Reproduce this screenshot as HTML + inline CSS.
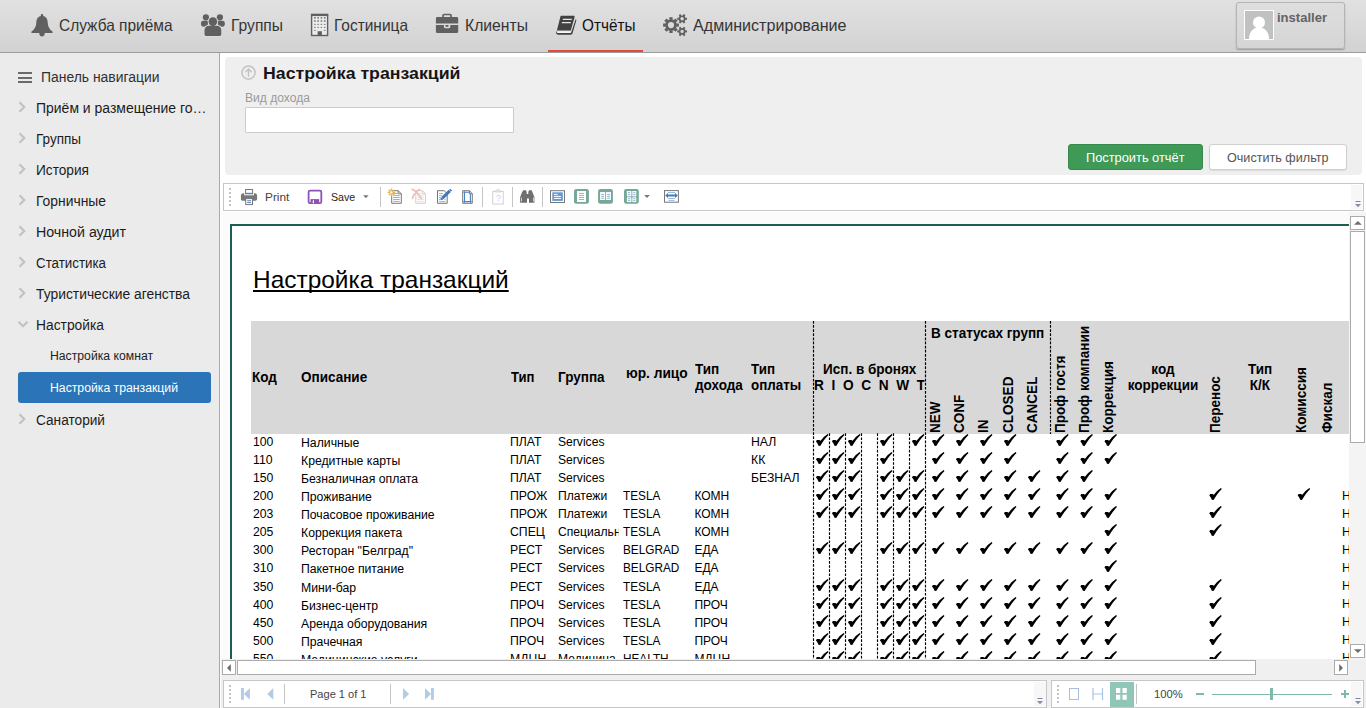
<!DOCTYPE html>
<html lang="ru"><head><meta charset="utf-8"><title>Настройка транзакций</title>
<style>
html,body{margin:0;padding:0;width:1366px;height:708px;overflow:hidden;background:#fff;font-family:"Liberation Sans",sans-serif;}
*{box-sizing:border-box;}
.a{position:absolute;}
.t{position:absolute;white-space:pre;transform-origin:0 50%;display:block;}
svg{position:absolute;overflow:visible;}
#nav{position:absolute;left:0;top:0;width:1366px;height:53px;background:linear-gradient(#e1e1e1,#d2d2d2);border-bottom:1px solid #9c9c9c;}
#side{position:absolute;left:0;top:53px;width:220px;height:655px;background:#ebebeb;border-right:1px solid #a9a9a9;}
#panel{position:absolute;left:225px;top:57px;width:1137px;height:118px;background:#efefef;border-radius:4px;}
.tb{position:absolute;background:#fff;border:1px solid #c6c6c6;}
.sep{position:absolute;width:1px;background:#c4c4c4;}
.grip{position:absolute;width:2px;}
.grip i{position:absolute;left:0;width:2px;height:2px;background:#c4c4c4;}
.rot{position:absolute;white-space:pre;font-weight:bold;font-size:14px;line-height:14px;color:#000;transform-origin:0 0;transform:rotate(-90deg) scaleX(.967);}
.d{position:absolute;font-size:12px;line-height:12px;color:#000;white-space:pre;transform-origin:0 50%;transform:scaleX(1.02);}
.h{position:absolute;font-size:14px;line-height:16px;font-weight:bold;color:#000;white-space:pre;transform-origin:0 50%;transform:scaleX(.965);}
.dash{position:absolute;width:1px;background:repeating-linear-gradient(to bottom,#000 0,#000 3px,transparent 3px,transparent 4px);}
.ck{position:absolute;width:13px;height:12px;}
</style></head><body>
<div id="nav"><svg style="left:31px;top:13.6px" width="22" height="22.6" viewBox="0 0 22 22.6"><path fill="#606060" d="M11 0c.75 0 1.2.5 1.2 1.2v.75c3 .65 4.5 3.1 4.5 6.3 0 4.2 1.7 6.9 4.7 9.3.3.25.4.6.3.9-.15.4-.5.6-.9.6H1.200c-.4 0-.75-.2-.9-.6-.1-.3 0-.65.3-.9 3-2.4 4.700-5.100 4.700-9.300 0-3.200 1.500-5.650 4.500-6.300V1.200C9.800.5 10.250 0 11 0zM8.300 18.600h5.400v1.200c0 1.500-1.200 2.700-2.700 2.700s-2.700-1.200-2.700-2.700z"/></svg><svg style="left:200px;top:13px" width="26" height="24" viewBox="200 13 26 24">
<circle cx="205.9" cy="17.3" r="3.1" fill="#606060"/><circle cx="219.9" cy="17.3" r="3.1" fill="#606060"/>
<path fill="#606060" d="M203.200 20.800h4.700v5.900h-4.400c-1.500 0-2.500-1-2.500-2.400v-1.200c0-1.400.9-2.300 2.200-2.300zM222.600 20.800h-4.700v5.900h4.400c1.500 0 2.500-1 2.500-2.400v-1.200c0-1.400-.9-2.300-2.200-2.300z"/>
<circle cx="212.9" cy="21.6" r="5.200" fill="#dcdcdc"/>
<path fill="#dcdcdc" d="M203.500 37V30c0-3 2.400-5.300 5.200-5.300h8.400c2.800 0 5.200 2.300 5.200 5.300v7z"/>
<circle cx="212.9" cy="21.600" r="4.300" fill="#606060"/>
<path fill="#606060" d="M204.500 34.200V30.200c0-2.500 1.900-4.500 4.400-4.500h8c2.500 0 4.400 2 4.400 4.500v4c0 1.100-.8 1.800-1.800 1.800h-13.200c-1 0-1.800-.7-1.800-1.800z"/>
</svg><svg style="left:310px;top:13px" width="20" height="24" viewBox="310 13 20 24"><rect x="311.600" y="14.500" width="16" height="21" fill="#ececec" stroke="#606060" stroke-width="1.400"/><rect x="311" y="13.900" width="17.200" height="2.200" fill="#606060"/><rect x="314.1" y="17.00" width="1.600" height="1.8" fill="#858585"/><rect x="314.1" y="20.10" width="1.600" height="1.8" fill="#858585"/><rect x="314.1" y="23.85" width="1.600" height="1.1" fill="#858585"/><rect x="314.1" y="26.85" width="1.600" height="1.1" fill="#858585"/><rect x="314.1" y="29.85" width="1.600" height="1.1" fill="#858585"/><rect x="317.3" y="17.00" width="1.600" height="1.8" fill="#858585"/><rect x="317.3" y="20.10" width="1.600" height="1.8" fill="#858585"/><rect x="317.3" y="23.85" width="1.600" height="1.1" fill="#858585"/><rect x="317.3" y="26.85" width="1.600" height="1.1" fill="#858585"/><rect x="320.6" y="17.00" width="1.600" height="1.8" fill="#858585"/><rect x="320.6" y="20.10" width="1.600" height="1.8" fill="#858585"/><rect x="320.6" y="23.85" width="1.600" height="1.1" fill="#858585"/><rect x="320.6" y="26.85" width="1.600" height="1.1" fill="#858585"/><rect x="323.9" y="17.00" width="1.600" height="1.8" fill="#858585"/><rect x="323.9" y="20.10" width="1.600" height="1.8" fill="#858585"/><rect x="323.9" y="23.85" width="1.600" height="1.1" fill="#858585"/><rect x="323.9" y="26.85" width="1.600" height="1.1" fill="#858585"/><rect x="323.9" y="29.85" width="1.600" height="1.1" fill="#858585"/><rect x="317.600" y="31.200" width="4.300" height="4.300" fill="#606060"/></svg><svg style="left:435px;top:13px" width="24" height="21" viewBox="435 13 24 21">
<path d="M443 17.200v-1.500c0-.7.500-1.200 1.200-1.200h5.700c.7 0 1.200.5 1.200 1.200v1.500" fill="none" stroke="#606060" stroke-width="1.700"/>
<path fill="#606060" d="M437.400 16.900h19.300c.9 0 1.500.6 1.500 1.500v5.100h-22.300v-5.100c0-.9.600-1.500 1.500-1.500zM435.900 25h8v2.100c0 .7.500 1.200 1.200 1.200h4c.7 0 1.200-.5 1.200-1.200V25h7.900v6.400c0 .9-.6 1.500-1.500 1.500h-19.300c-.9 0-1.500-.6-1.500-1.500z"/>
<rect x="445.500" y="25" width="2.900" height="1.800" fill="#606060"/>
</svg><svg style="left:555px;top:15px" width="23" height="21" viewBox="555 15 23 21">
<path fill="#414141" d="M561.300 15.800h12.300c.8 0 1.200.6 1 1.300l-3.800 13.500h-13.900l3.400-13.500c.2-.8.500-1.300 1-1.300z"/>
<path fill="#e4e4e4" d="M563 18.700h9l-.35 1.300h-9zM562 22h9l-.35 1.300h-9z"/>
<path fill="#414141" d="M575.600 19.200c.7.200.9.700.7 1.300l-3.700 12.600c-.3.900-.9 1.600-1.900 1.600h-12.300c-1.500 0-2.500-1.100-2.200-2.500.1-.6.500-1.100 1-1.300l-.2 1.100c-.1.600.3 1 .9 1h12.400c.5 0 .8-.3 1-.8z"/>
<path fill="#fff" d="M557.500 31.400h13.200l-.4 1.400h-12.400c-.5 0-.7-.3-.6-.8z"/>
</svg><svg style="left:662px;top:13px" width="26" height="24" viewBox="662 13 26 24"><circle cx="671" cy="25.1" r="4.50" fill="none" stroke="#606060" stroke-width="2.80"/><rect x="669.40" y="17.20" width="3.2" height="2.60" fill="#606060" transform="rotate(0.0 671 25.1)"/><rect x="669.40" y="17.20" width="3.2" height="2.60" fill="#606060" transform="rotate(45.0 671 25.1)"/><rect x="669.40" y="17.20" width="3.2" height="2.60" fill="#606060" transform="rotate(90.0 671 25.1)"/><rect x="669.40" y="17.20" width="3.2" height="2.60" fill="#606060" transform="rotate(135.0 671 25.1)"/><rect x="669.40" y="17.20" width="3.2" height="2.60" fill="#606060" transform="rotate(180.0 671 25.1)"/><rect x="669.40" y="17.20" width="3.2" height="2.60" fill="#606060" transform="rotate(225.0 671 25.1)"/><rect x="669.40" y="17.20" width="3.2" height="2.60" fill="#606060" transform="rotate(270.0 671 25.1)"/><rect x="669.40" y="17.20" width="3.2" height="2.60" fill="#606060" transform="rotate(315.0 671 25.1)"/><circle cx="682.1" cy="18.8" r="2.55" fill="none" stroke="#606060" stroke-width="1.70"/><rect x="681.10" y="13.90" width="2.0" height="2.10" fill="#606060" transform="rotate(30.0 682.1 18.8)"/><rect x="681.10" y="13.90" width="2.0" height="2.10" fill="#606060" transform="rotate(90.0 682.1 18.8)"/><rect x="681.10" y="13.90" width="2.0" height="2.10" fill="#606060" transform="rotate(150.0 682.1 18.8)"/><rect x="681.10" y="13.90" width="2.0" height="2.10" fill="#606060" transform="rotate(210.0 682.1 18.8)"/><rect x="681.10" y="13.90" width="2.0" height="2.10" fill="#606060" transform="rotate(270.0 682.1 18.8)"/><rect x="681.10" y="13.90" width="2.0" height="2.10" fill="#606060" transform="rotate(330.0 682.1 18.8)"/><circle cx="682.1" cy="31.4" r="2.55" fill="none" stroke="#606060" stroke-width="1.70"/><rect x="681.10" y="26.50" width="2.0" height="2.10" fill="#606060" transform="rotate(30.0 682.1 31.4)"/><rect x="681.10" y="26.50" width="2.0" height="2.10" fill="#606060" transform="rotate(90.0 682.1 31.4)"/><rect x="681.10" y="26.50" width="2.0" height="2.10" fill="#606060" transform="rotate(150.0 682.1 31.4)"/><rect x="681.10" y="26.50" width="2.0" height="2.10" fill="#606060" transform="rotate(210.0 682.1 31.4)"/><rect x="681.10" y="26.50" width="2.0" height="2.10" fill="#606060" transform="rotate(270.0 682.1 31.4)"/><rect x="681.10" y="26.50" width="2.0" height="2.10" fill="#606060" transform="rotate(330.0 682.1 31.4)"/></svg><span class="t" style="left:58.5px;top:17.33px;font-size:16.5px;line-height:16.5px;color:#353535;transform:scaleX(0.9375);">Служба приёма</span><span class="t" style="left:231px;top:17.33px;font-size:16.5px;line-height:16.5px;color:#353535;transform:scaleX(0.9457);">Группы</span><span class="t" style="left:334px;top:17.33px;font-size:16.5px;line-height:16.5px;color:#353535;transform:scaleX(0.9367);">Гостиница</span><span class="t" style="left:464.5px;top:17.33px;font-size:16.5px;line-height:16.5px;color:#353535;transform:scaleX(0.9521);">Клиенты</span><span class="t" style="left:582px;top:17.33px;font-size:16.5px;line-height:16.5px;color:#111;transform:scaleX(0.9289);">Отчёты</span><span class="t" style="left:692.5px;top:17.33px;font-size:16.5px;line-height:16.5px;color:#353535;transform:scaleX(0.9756);">Администрирование</span><div class="a" style="left:548px;top:50px;width:95px;height:2px;background:#df4b3f"></div><div class="a" style="left:1236px;top:2px;width:109px;height:47px;border:1px solid #b4b4b4;border-radius:3px;background:linear-gradient(#dedede,#d5d5d5);box-shadow:0 1px 1.500px rgba(0,0,0,.28)"></div><div class="a" style="left:1244px;top:10px;width:30px;height:30px;background:#c1c1c1;border:1px solid #fff;overflow:hidden"><svg style="left:0;top:0" width="28" height="28" viewBox="0 0 28 28"><circle cx="14" cy="11.500" r="6" fill="#fff"/><path fill="#fff" d="M4 28c0-7 4-11.500 10-11.500s10 4.500 10 11.500z"/></svg></div><span class="t" style="left:1277px;top:10.70px;font-size:13px;line-height:13px;color:#636363;font-weight:bold;transform:scaleX(1.0028);">installer</span></div><div id="side"></div><div class="a" style="left:18px;top:72px;width:14px;height:2px;background:#6a6a6a"></div><div class="a" style="left:18px;top:76.5px;width:14px;height:2px;background:#6a6a6a"></div><div class="a" style="left:18px;top:81.2px;width:14px;height:2px;background:#6a6a6a"></div><span class="t" style="left:40.5px;top:69.85px;font-size:14px;line-height:14px;color:#303030;transform:scaleX(0.9935);">Панель навигации</span><span class="t" style="left:36.2px;top:100.65px;font-size:14px;line-height:14px;color:#1c1c1c;transform:scaleX(0.9977);">Приём и размещение го…</span><svg style="left:18px;top:100.5px" width="8" height="12" viewBox="0 0 8 12"><path d="M1.500 1.300L6.200 6L1.500 10.700" fill="none" stroke="#c3c3c3" stroke-width="2.300"/></svg><span class="t" style="left:36.2px;top:131.65px;font-size:14px;line-height:14px;color:#1c1c1c;transform:scaleX(0.9645);">Группы</span><svg style="left:18px;top:131.5px" width="8" height="12" viewBox="0 0 8 12"><path d="M1.500 1.300L6.200 6L1.500 10.700" fill="none" stroke="#c3c3c3" stroke-width="2.300"/></svg><span class="t" style="left:36.2px;top:162.65px;font-size:14px;line-height:14px;color:#1c1c1c;transform:scaleX(0.9761);">История</span><svg style="left:18px;top:162.5px" width="8" height="12" viewBox="0 0 8 12"><path d="M1.500 1.300L6.200 6L1.500 10.700" fill="none" stroke="#c3c3c3" stroke-width="2.300"/></svg><span class="t" style="left:36.2px;top:193.65px;font-size:14px;line-height:14px;color:#1c1c1c;transform:scaleX(0.9907);">Горничные</span><svg style="left:18px;top:193.5px" width="8" height="12" viewBox="0 0 8 12"><path d="M1.500 1.300L6.200 6L1.500 10.700" fill="none" stroke="#c3c3c3" stroke-width="2.300"/></svg><span class="t" style="left:36.2px;top:224.65px;font-size:14px;line-height:14px;color:#1c1c1c;transform:scaleX(1.0148);">Ночной аудит</span><svg style="left:18px;top:224.5px" width="8" height="12" viewBox="0 0 8 12"><path d="M1.500 1.300L6.200 6L1.500 10.700" fill="none" stroke="#c3c3c3" stroke-width="2.300"/></svg><span class="t" style="left:36.2px;top:255.65px;font-size:14px;line-height:14px;color:#1c1c1c;transform:scaleX(0.9520);">Статистика</span><svg style="left:18px;top:255.5px" width="8" height="12" viewBox="0 0 8 12"><path d="M1.500 1.300L6.200 6L1.500 10.700" fill="none" stroke="#c3c3c3" stroke-width="2.300"/></svg><span class="t" style="left:36.2px;top:286.65px;font-size:14px;line-height:14px;color:#1c1c1c;transform:scaleX(0.9889);">Туристические агенства</span><svg style="left:18px;top:286.5px" width="8" height="12" viewBox="0 0 8 12"><path d="M1.500 1.300L6.200 6L1.500 10.700" fill="none" stroke="#c3c3c3" stroke-width="2.300"/></svg><span class="t" style="left:36.2px;top:317.65px;font-size:14px;line-height:14px;color:#1c1c1c;transform:scaleX(0.9866);">Настройка</span><svg style="left:17px;top:319.5px" width="12" height="8" viewBox="0 0 12 8"><path d="M1.500 1.800L6 6.200L10.500 1.800" fill="none" stroke="#c3c3c3" stroke-width="2.300"/></svg><span class="t" style="left:50.3px;top:349.92px;font-size:12.5px;line-height:12.5px;color:#222;transform:scaleX(0.9766);">Настройка комнат</span><div class="a" style="left:18px;top:372px;width:193px;height:31px;background:#2b74b8;border-radius:3px"></div><span class="t" style="left:50.3px;top:381.92px;font-size:12.5px;line-height:12.5px;color:#fff;transform:scaleX(0.9784);">Настройка транзакций</span><span class="t" style="left:36.2px;top:412.75px;font-size:14px;line-height:14px;color:#1c1c1c;transform:scaleX(0.9755);">Санаторий</span><svg style="left:18px;top:412.6px" width="8" height="12" viewBox="0 0 8 12"><path d="M1.500 1.300L6.200 6L1.500 10.700" fill="none" stroke="#c3c3c3" stroke-width="2.300"/></svg><div id="panel"></div><svg style="left:241px;top:65px" width="16" height="16" viewBox="0 0 16 16"><circle cx="7.500" cy="7.600" r="6.600" fill="none" stroke="#c2c2c2" stroke-width="1.500"/><path d="M7.500 11.800V4M4.300 7.200L7.500 4L10.700 7.200" fill="none" stroke="#c2c2c2" stroke-width="1.400"/></svg><span class="t" style="left:263px;top:64.63px;font-size:16.5px;line-height:16.5px;color:#161616;font-weight:bold;transform:scaleX(1.0744);">Настройка транзакций</span><span class="t" style="left:245.2px;top:92.04px;font-size:12px;line-height:12px;color:#9a9a9a;transform:scaleX(1.0070);">Вид дохода</span><div class="a" style="left:245px;top:107px;width:269px;height:26px;background:#fff;border:1px solid #cbcbcb;border-radius:1px"></div><div class="a" style="left:1068px;top:144px;width:135px;height:26px;background:#3f9a57;border:1px solid #36894c;border-radius:3px"></div><span class="t" style="left:1085.5px;top:150.87px;font-size:13.5px;line-height:13.5px;color:#fff;transform:scaleX(0.9490);">Построить отчёт</span><div class="a" style="left:1209px;top:144px;width:138px;height:26px;background:#fff;border:1px solid #cfcfcf;border-radius:3px;box-shadow:0 1px 1px rgba(0,0,0,.08)"></div><span class="t" style="left:1227px;top:150.87px;font-size:13.5px;line-height:13.5px;color:#555;transform:scaleX(0.9336);">Очистить фильтр</span><div class="tb" style="left:223px;top:183px;width:1141px;height:28px"></div><div class="a" style="left:1351px;top:185px;width:11px;height:24px;background:#f7f7f7"></div><svg style="left:1354px;top:201px" width="8" height="8" viewBox="0 0 8 8"><path d="M1.500 .5h5" stroke="#7d849f" stroke-width="1" fill="none"/><path d="M1 3h6L4 6.200z" fill="#868da6"/></svg><div class="grip" style="left:229px;top:0"><i style="top:188px"></i><i style="top:192px"></i><i style="top:196px"></i><i style="top:200px"></i><i style="top:204px"></i></div><svg style="left:240px;top:188px" width="18" height="18" viewBox="240 188 18 18">
<path fill="#777" d="M243.200 193.200h11.600c1.300 0 2.300 1 2.300 2.300v3.600c0 1-.8 1.700-1.700 1.700h-12.800c-1 0-1.700-.8-1.700-1.700v-3.600c0-1.300 1-2.300 2.300-2.300z"/>
<rect x="244.200" y="192.800" width="9.800" height="2.500" fill="#fff"/><rect x="245.600" y="189.500" width="7" height="4.300" fill="#fff" stroke="#777" stroke-width="1"/>
<rect x="245.200" y="192.800" width="7.800" height="1" fill="#4a83c4"/>
<rect x="245.700" y="198.600" width="6.800" height="6" fill="#fff" stroke="#777" stroke-width="1"/>
<rect x="247.200" y="200.200" width="3.900" height="1" fill="#4a83c4"/><rect x="247.200" y="202.100" width="3.900" height="1" fill="#4a83c4"/>
</svg><span class="t" style="left:265.2px;top:191.57px;font-size:11.5px;line-height:11.5px;color:#444;transform:scaleX(1.0272);">Print</span><svg style="left:307px;top:189px" width="16" height="16" viewBox="307 189 16 16">
<rect x="308.600" y="190.700" width="12.700" height="12.500" rx="1.400" fill="#fff" stroke="#8e52b7" stroke-width="1.800"/>
<rect x="310.500" y="199.100" width="8.700" height="4.600" fill="#8e52b7"/><rect x="312.800" y="200.300" width="1.200" height="3" fill="#fff"/>
</svg><span class="t" style="left:330.8px;top:191.57px;font-size:11.5px;line-height:11.5px;color:#1e1e1e;transform:scaleX(0.9268);">Save</span><svg style="left:363px;top:195px" width="6" height="4" viewBox="0 0 6 4"><path d="M.2.300h5.400L2.900 3.300z" fill="#777"/></svg><div class="sep" style="left:380px;top:187px;height:20px"></div><svg style="left:386px;top:187px" width="18" height="18" viewBox="386 187 18 18"><path d="M391.70 190.700H398.20L401.30 193.800V203.300H391.70z" fill="#fff" stroke="#777" stroke-width="1"/><path d="M398.20 190.700V193.800H401.30" fill="none" stroke="#777" stroke-width="1"/><rect x="393.20" y="193.00" width="6.600" height="1" fill="#8fb1de"/><rect x="393.20" y="195.10" width="6.600" height="1" fill="#8fb1de"/><rect x="393.20" y="197.00" width="6.600" height="1" fill="#8fb1de"/><rect x="393.20" y="199.00" width="6.600" height="1" fill="#8fb1de"/><rect x="393.20" y="200.90" width="6.600" height="1" fill="#8fb1de"/>
<g stroke="#e6b54a" stroke-width="1.300"><path d="M391.400 188.600v7.600M387.600 192.400h7.600M388.700 189.700l5.400 5.400M394.100 189.700l-5.400 5.400"/></g><circle cx="391.400" cy="192.400" r="1.100" fill="#fff"/>
</svg><svg style="left:411px;top:187px" width="18" height="18" viewBox="411 187 18 18"><path d="M415.80 190.700H422.30L425.40 193.800V203.300H415.80z" fill="#fff" stroke="#cdcdcd" stroke-width="1"/><path d="M422.30 190.700V193.800H425.40" fill="none" stroke="#cdcdcd" stroke-width="1"/><rect x="417.30" y="193.00" width="6.600" height="1" fill="#dbe6f4"/><rect x="417.30" y="195.10" width="6.600" height="1" fill="#dbe6f4"/><rect x="417.30" y="197.00" width="6.600" height="1" fill="#dbe6f4"/><rect x="417.30" y="199.00" width="6.600" height="1" fill="#dbe6f4"/><rect x="417.30" y="200.90" width="6.600" height="1" fill="#dbe6f4"/>
<path d="M412.300 189.200c3 1.500 6.500 5 8.800 9.200M419.500 189.400c-3.500 1.800-6.300 5.500-7 9" fill="none" stroke="#f1bdb3" stroke-width="1.700" stroke-linecap="round"/>
</svg><svg style="left:436px;top:187px" width="18" height="18" viewBox="436 187 18 18">
<path d="M437.500 190.700H444.300L447.200 193.800V203.300H437.500z" fill="#fff" stroke="#777" stroke-width="1"/>
<rect x="439" y="193" width="3.800" height="1" fill="#8fb1de"/><rect x="439" y="195.100" width="2.800" height="1" fill="#8fb1de"/><rect x="439" y="197.100" width="1.800" height="1" fill="#8fb1de"/><rect x="439" y="199.100" width="1.200" height="1" fill="#8fb1de"/><rect x="439" y="201.200" width="6.600" height="1" fill="#8fb1de"/><rect x="444.500" y="199.100" width="1.200" height="1" fill="#8fb1de"/>
<path d="M449.800 190.800L442.400 198.100" stroke="#3f79ba" stroke-width="3.100" fill="none"/><path d="M441 197.600l2 2-2.400.6z M450.300 188.700l1.800 1.800-1.100 1.100-1.800-1.800z" fill="#3f79ba"/><rect x="440.700" y="197.700" width="2" height="2" fill="#3f79ba"/>
</svg><svg style="left:461px;top:187px" width="14" height="18" viewBox="461 187 14 18">
<path d="M462.700 190.700H469.500L472.300 193.800V203.300H462.700z" fill="#fff" stroke="#777" stroke-width="1"/><path d="M469.500 190.700V193.800H472.300" fill="none" stroke="#777" stroke-width="1"/>
<path d="M464.500 191.300v11.500M470.400 193.500v9.300M463.300 192.200h6.600M463.300 201.600h8.400" stroke="#4c82c3" stroke-width="1.100" fill="none"/>
</svg><div class="sep" style="left:482px;top:187px;height:20px"></div><svg style="left:491px;top:188px" width="14" height="18" viewBox="491 188 14 18">
<rect x="492.700" y="191.500" width="10.600" height="12.500" fill="#fff" stroke="#d2d2d2" stroke-width="1"/>
<path d="M495 192v-1.200h1.500c0-1 .6-1.500 1.500-1.500s1.500.5 1.500 1.500h1.500V192z" fill="#e4e4e4" stroke="#d2d2d2" stroke-width=".8"/>
</svg><span class="t" style="left:495.7px;top:193.26px;font-size:9.5px;line-height:9.5px;color:#bdd2ee;">?</span><div class="sep" style="left:512px;top:187px;height:20px"></div><svg style="left:519px;top:189px" width="17" height="15" viewBox="519 189 17 15">
<path fill="#6f6f6f" d="M523.300 190.300h2.600l.5 1.300h.3v2.400h1.600v-2.400h.3l.5-1.300h2.600l.5 1.400.9 2 .8 2.300.5 1v5.700h-5.400v-4.300h-2v4.300H520.100V197l.5-1 .8-2.300.9-2z"/>
<path d="M521.500 197.500v4M533.500 197.500v4" stroke="#d8d8d8" stroke-width=".9"/>
</svg><div class="sep" style="left:542px;top:187px;height:20px"></div><svg style="left:549px;top:189px" width="17" height="15" viewBox="549 189 17 15">
<rect x="550.500" y="190.700" width="14" height="11.800" fill="#fff" stroke="#777" stroke-width="1"/>
<rect x="552.300" y="192.300" width="10.500" height="8.600" fill="#5e9ad6"/>
<rect x="554" y="193.900" width="3.600" height="1" fill="#fff"/><rect x="554" y="195.900" width="7" height="1" fill="#fff"/><rect x="554" y="197.900" width="7" height="1" fill="#fff"/>
</svg><svg style="left:573px;top:188px" width="17" height="17" viewBox="573 188 17 17">
<rect x="574" y="189.100" width="14.900" height="14.700" rx="2.200" fill="#75a895"/><rect x="577" y="191" width="9" height="11" fill="#fff"/><rect x="579" y="192.90" width="5" height="1" fill="#8fb1de"/><rect x="579" y="194.90" width="5" height="1" fill="#8fb1de"/><rect x="579" y="197.00" width="5" height="1" fill="#8fb1de"/><rect x="579" y="199.00" width="5" height="1" fill="#8fb1de"/>
</svg><svg style="left:597px;top:188px" width="17" height="17" viewBox="597 188 17 17">
<rect x="598.100" y="189.100" width="14.800" height="14.700" rx="2.200" fill="#75a895"/><rect x="600.100" y="192.100" width="5.100" height="7.900" fill="#fff"/><rect x="606.100" y="192.100" width="4.900" height="7.900" fill="#fff"/><rect x="601.2" y="193.90" width="3" height="1" fill="#8fb1de"/><rect x="601.2" y="195.80" width="3" height="1" fill="#8fb1de"/><rect x="601.2" y="197.70" width="3" height="1" fill="#8fb1de"/><rect x="607.1" y="193.90" width="3" height="1" fill="#8fb1de"/><rect x="607.1" y="195.80" width="3" height="1" fill="#8fb1de"/><rect x="607.1" y="197.70" width="3" height="1" fill="#8fb1de"/>
</svg><svg style="left:623px;top:188px" width="17" height="17" viewBox="623 188 17 17">
<rect x="624" y="189.100" width="14.800" height="14.700" rx="2.200" fill="#75a895"/>
<rect x="626.900" y="191" width="4.500" height="5.400" fill="#fff"/><rect x="632.300" y="191" width="4" height="5.400" fill="#fff"/><rect x="626.900" y="197.300" width="4.500" height="4.800" fill="#fff"/><rect x="632.300" y="197.300" width="4" height="4.800" fill="#fff"/>
<rect x="628" y="192.20" width="2.2" height="1" fill="#8fb1de"/><rect x="628" y="194.10" width="2.2" height="1" fill="#8fb1de"/><rect x="628" y="198.30" width="2.2" height="1" fill="#8fb1de"/><rect x="628" y="200.10" width="2.2" height="1" fill="#8fb1de"/><rect x="633.3" y="192.20" width="2.1" height="1" fill="#8fb1de"/><rect x="633.3" y="194.10" width="2.1" height="1" fill="#8fb1de"/><rect x="633.3" y="198.30" width="2.1" height="1" fill="#8fb1de"/><rect x="633.3" y="200.10" width="2.1" height="1" fill="#8fb1de"/>
</svg><svg style="left:644px;top:195px" width="6" height="4" viewBox="0 0 6 4"><path d="M.2 0h5.600L3 3z" fill="#777"/></svg><svg style="left:663px;top:189px" width="17" height="15" viewBox="663 189 17 15">
<rect x="664.500" y="190.600" width="13.900" height="11.600" fill="#fff" stroke="#777" stroke-width="1"/>
<rect x="668" y="192.00" width="7" height="1" fill="#9fbde3"/><rect x="668" y="194.00" width="7" height="1" fill="#9fbde3"/><rect x="668" y="196.00" width="7" height="1" fill="#9fbde3"/><rect x="668" y="198.00" width="7" height="1" fill="#9fbde3"/><rect x="668.5" y="199.90" width="6" height="1" fill="#9fbde3"/>
<path d="M665.200 195.500l2.800-2.600v5.200zM677.800 195.500l-2.800-2.600v5.200z" fill="#3f79ba"/><rect x="667" y="195" width="9" height="1" fill="#3f79ba"/>
</svg><div class="a" style="left:221px;top:212px;width:1145px;height:496px;background:#f1f1f1"></div><div class="a" style="left:221px;top:212px;width:1128px;height:447px;background:#fbfbfb"></div><div class="a" style="left:0;top:0;width:1366px;height:708px;clip-path:inset(212px 17px 49px 221px)"><div class="a" style="left:230px;top:224px;width:1200px;height:600px;background:#fff;border-left:2px solid #1e5d55;border-top:2px solid #1e5d55"></div><div class="a" style="left:252.8px;top:267.68px;font-size:24px;line-height:24px;color:#000;white-space:pre;transform-origin:0 50%;transform:scaleX(1.018);text-decoration:underline;text-decoration-skip-ink:none;text-decoration-thickness:1.800px;text-underline-offset:2.300px">Настройка транзакций</div><div class="a" style="left:251px;top:321px;width:1200px;height:113px;background:#d8d8d8"></div><div class="h" style="left:252.4px;top:369.37px;">Код</div><div class="h" style="left:300.6px;top:369.37px;">Описание</div><div class="h" style="left:510.6px;top:369.37px;transform:scaleX(.935)">Тип</div><div class="h" style="left:557.7px;top:369.37px;">Группа</div><div class="h" style="left:626.2px;top:365.47px;transform:scaleX(.98)">юр. лицо</div><div class="h" style="left:695px;top:361.27px;">Тип
дохода</div><div class="h" style="left:751.2px;top:361.27px;transform:scaleX(.955)">Тип
оплаты</div><div class="h" style="left:822.5px;top:361.27px;">Исп. в бронях</div><div class="h" style="left:814.3px;top:377.17px;width:113.2px;overflow:hidden;transform:scaleX(.978)">R  I  O  C  N  W  T</div><div class="h" style="left:931px;top:325.27px;">В статусах групп</div><div class="h" style="left:1113px;top:360.77px;width:100px;text-align:center;transform-origin:50% 50%">код
коррекции</div><div class="h" style="left:1210px;top:360.77px;width:100px;text-align:center;transform-origin:50% 50%">Тип
К/К</div><div class="rot" style="left:928.35px;top:432.8px">NEW</div><div class="rot" style="left:952.35px;top:432.8px">CONF</div><div class="rot" style="left:976.45px;top:432.8px">IN</div><div class="rot" style="left:1000.85px;top:432.8px">CLOSED</div><div class="rot" style="left:1025.15px;top:432.8px">CANCEL</div><div class="rot" style="left:1052.85px;top:432.8px">Проф гостя</div><div class="rot" style="left:1076.95px;top:432.8px">Проф компании</div><div class="rot" style="left:1101.35px;top:432.8px">Коррекция</div><div class="rot" style="left:1208.15px;top:432.8px">Перенос</div><div class="rot" style="left:1293.55px;top:432.8px">Комиссия</div><div class="rot" style="left:1320.35px;top:432.8px">Фискал</div><svg style="left:0;top:0" width="1366" height="708" viewBox="0 0 1366 708"><g stroke="#000" stroke-width="1.150" stroke-dasharray="2.700 1.420" fill="none"><path d="M813.5 321V661"/><path d="M925.5 321V661"/><path d="M1050.500 321V434"/><path d="M829.5 433.300V661"/><path d="M845.5 433.300V661"/><path d="M861.5 433.300V661"/><path d="M877.5 433.300V661"/><path d="M893.5 433.300V661"/><path d="M909.5 433.300V661"/></g></svg><div class="d" style="left:252.9px;top:435.84px;">100</div><div class="d" style="left:300.6px;top:436.84px;">Наличные</div><div class="d" style="left:510.2px;top:435.84px;">ПЛАТ</div><div class="d" style="left:557.9px;top:435.84px;width:60px;overflow:hidden;transform:scaleX(1.01)">Services</div><div class="d" style="left:751.3px;top:435.84px;">НАЛ</div><div class="d" style="left:252.9px;top:453.84px;">110</div><div class="d" style="left:300.6px;top:454.84px;">Кредитные карты</div><div class="d" style="left:510.2px;top:453.84px;">ПЛАТ</div><div class="d" style="left:557.9px;top:453.84px;width:60px;overflow:hidden;transform:scaleX(1.01)">Services</div><div class="d" style="left:751.3px;top:453.84px;">КК</div><div class="d" style="left:252.9px;top:471.84px;">150</div><div class="d" style="left:300.6px;top:472.84px;">Безналичная оплата</div><div class="d" style="left:510.2px;top:471.84px;">ПЛАТ</div><div class="d" style="left:557.9px;top:471.84px;width:60px;overflow:hidden;transform:scaleX(1.01)">Services</div><div class="d" style="left:751.3px;top:471.84px;">БЕЗНАЛ</div><div class="d" style="left:252.9px;top:489.84px;">200</div><div class="d" style="left:300.6px;top:490.84px;">Проживание</div><div class="d" style="left:510.2px;top:489.84px;">ПРОЖ</div><div class="d" style="left:557.9px;top:489.84px;width:60px;overflow:hidden;transform:scaleX(1.01)">Платежи</div><div class="d" style="left:623.3px;top:489.84px;transform:scaleX(.982)">TESLA</div><div class="d" style="left:694.4px;top:489.84px;transform:scaleX(1)">КОМН</div><div class="d" style="left:1342.2px;top:489.84px;">Н</div><div class="d" style="left:252.9px;top:507.84px;">203</div><div class="d" style="left:300.6px;top:508.84px;">Почасовое проживание</div><div class="d" style="left:510.2px;top:507.84px;">ПРОЖ</div><div class="d" style="left:557.9px;top:507.84px;width:60px;overflow:hidden;transform:scaleX(1.01)">Платежи</div><div class="d" style="left:623.3px;top:507.84px;transform:scaleX(.982)">TESLA</div><div class="d" style="left:694.4px;top:507.84px;transform:scaleX(1)">КОМН</div><div class="d" style="left:1342.2px;top:507.84px;">Н</div><div class="d" style="left:252.9px;top:525.84px;">205</div><div class="d" style="left:300.6px;top:526.84px;">Коррекция пакета</div><div class="d" style="left:510.2px;top:525.84px;">СПЕЦ</div><div class="d" style="left:557.9px;top:525.84px;width:60px;overflow:hidden;transform:scaleX(1.01)">Специальные</div><div class="d" style="left:623.3px;top:525.84px;transform:scaleX(.982)">TESLA</div><div class="d" style="left:694.4px;top:525.84px;transform:scaleX(1)">КОМН</div><div class="d" style="left:1342.2px;top:525.84px;">Н</div><div class="d" style="left:252.9px;top:543.84px;">300</div><div class="d" style="left:300.6px;top:544.84px;">Ресторан &quot;Белград&quot;</div><div class="d" style="left:510.2px;top:543.84px;">РЕСТ</div><div class="d" style="left:557.9px;top:543.84px;width:60px;overflow:hidden;transform:scaleX(1.01)">Services</div><div class="d" style="left:623.3px;top:543.84px;transform:scaleX(.982)">BELGRAD</div><div class="d" style="left:694.4px;top:543.84px;transform:scaleX(1)">ЕДА</div><div class="d" style="left:1342.2px;top:543.84px;">Н</div><div class="d" style="left:252.9px;top:561.84px;">310</div><div class="d" style="left:300.6px;top:562.84px;">Пакетное питание</div><div class="d" style="left:510.2px;top:561.84px;">РЕСТ</div><div class="d" style="left:557.9px;top:561.84px;width:60px;overflow:hidden;transform:scaleX(1.01)">Services</div><div class="d" style="left:623.3px;top:561.84px;transform:scaleX(.982)">BELGRAD</div><div class="d" style="left:694.4px;top:561.84px;transform:scaleX(1)">ЕДА</div><div class="d" style="left:1342.2px;top:561.84px;">Н</div><div class="d" style="left:252.9px;top:580.84px;">350</div><div class="d" style="left:300.6px;top:581.84px;">Мини-бар</div><div class="d" style="left:510.2px;top:580.84px;">РЕСТ</div><div class="d" style="left:557.9px;top:580.84px;width:60px;overflow:hidden;transform:scaleX(1.01)">Services</div><div class="d" style="left:623.3px;top:580.84px;transform:scaleX(.982)">TESLA</div><div class="d" style="left:694.4px;top:580.84px;transform:scaleX(1)">ЕДА</div><div class="d" style="left:1342.2px;top:579.84px;">Н</div><div class="d" style="left:252.9px;top:598.84px;">400</div><div class="d" style="left:300.6px;top:599.84px;">Бизнес-центр</div><div class="d" style="left:510.2px;top:598.84px;">ПРОЧ</div><div class="d" style="left:557.9px;top:598.84px;width:60px;overflow:hidden;transform:scaleX(1.01)">Services</div><div class="d" style="left:623.3px;top:598.84px;transform:scaleX(.982)">TESLA</div><div class="d" style="left:694.4px;top:598.84px;transform:scaleX(1)">ПРОЧ</div><div class="d" style="left:1342.2px;top:597.84px;">Н</div><div class="d" style="left:252.9px;top:616.84px;">450</div><div class="d" style="left:300.6px;top:617.84px;">Аренда оборудования</div><div class="d" style="left:510.2px;top:616.84px;">ПРОЧ</div><div class="d" style="left:557.9px;top:616.84px;width:60px;overflow:hidden;transform:scaleX(1.01)">Services</div><div class="d" style="left:623.3px;top:616.84px;transform:scaleX(.982)">TESLA</div><div class="d" style="left:694.4px;top:616.84px;transform:scaleX(1)">ПРОЧ</div><div class="d" style="left:1342.2px;top:615.84px;">Н</div><div class="d" style="left:252.9px;top:634.84px;">500</div><div class="d" style="left:300.6px;top:635.84px;">Прачечная</div><div class="d" style="left:510.2px;top:634.84px;">ПРОЧ</div><div class="d" style="left:557.9px;top:634.84px;width:60px;overflow:hidden;transform:scaleX(1.01)">Services</div><div class="d" style="left:623.3px;top:634.84px;transform:scaleX(.982)">TESLA</div><div class="d" style="left:694.4px;top:634.84px;transform:scaleX(1)">ПРОЧ</div><div class="d" style="left:1342.2px;top:633.84px;">Н</div><div class="d" style="left:252.9px;top:652.84px;">550</div><div class="d" style="left:300.6px;top:653.84px;">Медицинские услуги</div><div class="d" style="left:510.2px;top:652.84px;">МДЦН</div><div class="d" style="left:557.9px;top:652.84px;width:60px;overflow:hidden;transform:scaleX(1.01)">Медицина</div><div class="d" style="left:623.3px;top:652.84px;transform:scaleX(.982)">HEALTH</div><div class="d" style="left:694.4px;top:652.84px;transform:scaleX(1)">МДЦН</div><div class="d" style="left:1342.2px;top:651.84px;">Н</div><svg style="left:0;top:0" width="1366" height="708" viewBox="0 0 1366 708"><g fill="#000"><path transform="translate(816 434)" d="M11.600 0L12.500 1.100Q9.300 4.100 5.200 10.400L4.200 11.900L2.500 11.700Q1.800 9.200 0 7.400L.8 6.100L3.300 6.100L4.600 6.700Q7.600 2.500 11.600 0Z"/><path transform="translate(832 434)" d="M11.600 0L12.500 1.100Q9.300 4.100 5.200 10.400L4.200 11.900L2.500 11.700Q1.800 9.200 0 7.400L.8 6.100L3.300 6.100L4.600 6.700Q7.600 2.500 11.600 0Z"/><path transform="translate(848 434)" d="M11.600 0L12.500 1.100Q9.300 4.100 5.200 10.400L4.200 11.900L2.500 11.700Q1.800 9.200 0 7.400L.8 6.100L3.300 6.100L4.600 6.700Q7.600 2.500 11.600 0Z"/><path transform="translate(880 434)" d="M11.600 0L12.500 1.100Q9.300 4.100 5.200 10.400L4.200 11.900L2.500 11.700Q1.800 9.200 0 7.400L.8 6.100L3.300 6.100L4.600 6.700Q7.600 2.500 11.600 0Z"/><path transform="translate(912 434)" d="M11.600 0L12.500 1.100Q9.300 4.100 5.200 10.400L4.200 11.900L2.500 11.700Q1.800 9.200 0 7.400L.8 6.100L3.300 6.100L4.600 6.700Q7.600 2.500 11.600 0Z"/><path transform="translate(932 434)" d="M11.600 0L12.500 1.100Q9.300 4.100 5.200 10.400L4.200 11.900L2.500 11.700Q1.800 9.200 0 7.400L.8 6.100L3.300 6.100L4.600 6.700Q7.600 2.500 11.600 0Z"/><path transform="translate(956 434)" d="M11.600 0L12.500 1.100Q9.300 4.100 5.200 10.400L4.200 11.900L2.500 11.700Q1.800 9.200 0 7.400L.8 6.100L3.300 6.100L4.600 6.700Q7.600 2.500 11.600 0Z"/><path transform="translate(980 434)" d="M11.600 0L12.500 1.100Q9.300 4.100 5.200 10.400L4.200 11.900L2.500 11.700Q1.800 9.200 0 7.400L.8 6.100L3.300 6.100L4.600 6.700Q7.600 2.500 11.600 0Z"/><path transform="translate(1004 434)" d="M11.600 0L12.500 1.100Q9.300 4.100 5.200 10.400L4.200 11.900L2.500 11.700Q1.800 9.200 0 7.400L.8 6.100L3.300 6.100L4.600 6.700Q7.600 2.500 11.600 0Z"/><path transform="translate(1056.2 434)" d="M11.600 0L12.500 1.100Q9.300 4.100 5.200 10.400L4.200 11.900L2.500 11.700Q1.800 9.200 0 7.400L.8 6.100L3.300 6.100L4.600 6.700Q7.600 2.500 11.600 0Z"/><path transform="translate(1080.4 434)" d="M11.600 0L12.500 1.100Q9.300 4.100 5.200 10.400L4.200 11.900L2.500 11.700Q1.800 9.200 0 7.400L.8 6.100L3.300 6.100L4.600 6.700Q7.600 2.500 11.600 0Z"/><path transform="translate(1104.5 434)" d="M11.600 0L12.500 1.100Q9.300 4.100 5.200 10.400L4.200 11.900L2.500 11.700Q1.800 9.200 0 7.400L.8 6.100L3.300 6.100L4.600 6.700Q7.600 2.500 11.600 0Z"/><path transform="translate(816 452)" d="M11.600 0L12.500 1.100Q9.300 4.100 5.200 10.400L4.200 11.900L2.500 11.700Q1.800 9.200 0 7.400L.8 6.100L3.300 6.100L4.600 6.700Q7.600 2.500 11.600 0Z"/><path transform="translate(832 452)" d="M11.600 0L12.500 1.100Q9.300 4.100 5.200 10.400L4.200 11.900L2.500 11.700Q1.800 9.200 0 7.400L.8 6.100L3.300 6.100L4.600 6.700Q7.600 2.500 11.600 0Z"/><path transform="translate(848 452)" d="M11.600 0L12.500 1.100Q9.300 4.100 5.200 10.400L4.200 11.900L2.500 11.700Q1.800 9.200 0 7.400L.8 6.100L3.300 6.100L4.600 6.700Q7.600 2.500 11.600 0Z"/><path transform="translate(880 452)" d="M11.600 0L12.500 1.100Q9.300 4.100 5.200 10.400L4.200 11.900L2.500 11.700Q1.800 9.200 0 7.400L.8 6.100L3.300 6.100L4.600 6.700Q7.600 2.500 11.600 0Z"/><path transform="translate(932 452)" d="M11.600 0L12.500 1.100Q9.300 4.100 5.200 10.400L4.200 11.900L2.500 11.700Q1.800 9.200 0 7.400L.8 6.100L3.300 6.100L4.600 6.700Q7.600 2.500 11.600 0Z"/><path transform="translate(956 452)" d="M11.600 0L12.500 1.100Q9.300 4.100 5.200 10.400L4.200 11.900L2.500 11.700Q1.800 9.200 0 7.400L.8 6.100L3.300 6.100L4.600 6.700Q7.600 2.500 11.600 0Z"/><path transform="translate(980 452)" d="M11.600 0L12.500 1.100Q9.300 4.100 5.200 10.400L4.200 11.900L2.500 11.700Q1.800 9.200 0 7.400L.8 6.100L3.300 6.100L4.600 6.700Q7.600 2.500 11.600 0Z"/><path transform="translate(1004 452)" d="M11.600 0L12.500 1.100Q9.300 4.100 5.200 10.400L4.200 11.900L2.500 11.700Q1.800 9.200 0 7.400L.8 6.100L3.300 6.100L4.600 6.700Q7.600 2.500 11.600 0Z"/><path transform="translate(1056.2 452)" d="M11.600 0L12.500 1.100Q9.300 4.100 5.200 10.400L4.200 11.900L2.500 11.700Q1.800 9.200 0 7.400L.8 6.100L3.300 6.100L4.600 6.700Q7.600 2.500 11.600 0Z"/><path transform="translate(1080.4 452)" d="M11.600 0L12.500 1.100Q9.300 4.100 5.200 10.400L4.200 11.900L2.500 11.700Q1.800 9.200 0 7.400L.8 6.100L3.300 6.100L4.600 6.700Q7.600 2.500 11.600 0Z"/><path transform="translate(1104.5 452)" d="M11.600 0L12.500 1.100Q9.300 4.100 5.200 10.400L4.200 11.900L2.500 11.700Q1.800 9.200 0 7.400L.8 6.100L3.300 6.100L4.600 6.700Q7.600 2.500 11.600 0Z"/><path transform="translate(816 470)" d="M11.600 0L12.500 1.100Q9.300 4.100 5.200 10.400L4.200 11.900L2.500 11.700Q1.800 9.200 0 7.400L.8 6.100L3.300 6.100L4.600 6.700Q7.600 2.500 11.600 0Z"/><path transform="translate(832 470)" d="M11.600 0L12.500 1.100Q9.300 4.100 5.200 10.400L4.200 11.900L2.500 11.700Q1.800 9.200 0 7.400L.8 6.100L3.300 6.100L4.600 6.700Q7.600 2.500 11.600 0Z"/><path transform="translate(848 470)" d="M11.600 0L12.500 1.100Q9.300 4.100 5.200 10.400L4.200 11.900L2.500 11.700Q1.800 9.200 0 7.400L.8 6.100L3.300 6.100L4.600 6.700Q7.600 2.500 11.600 0Z"/><path transform="translate(880 470)" d="M11.600 0L12.500 1.100Q9.300 4.100 5.200 10.400L4.200 11.900L2.500 11.700Q1.800 9.200 0 7.400L.8 6.100L3.300 6.100L4.600 6.700Q7.600 2.500 11.600 0Z"/><path transform="translate(896 470)" d="M11.600 0L12.500 1.100Q9.300 4.100 5.200 10.400L4.200 11.900L2.500 11.700Q1.800 9.200 0 7.400L.8 6.100L3.300 6.100L4.600 6.700Q7.600 2.500 11.600 0Z"/><path transform="translate(912 470)" d="M11.600 0L12.500 1.100Q9.300 4.100 5.200 10.400L4.200 11.900L2.500 11.700Q1.800 9.200 0 7.400L.8 6.100L3.300 6.100L4.600 6.700Q7.600 2.500 11.600 0Z"/><path transform="translate(932 470)" d="M11.600 0L12.500 1.100Q9.300 4.100 5.200 10.400L4.200 11.900L2.500 11.700Q1.800 9.200 0 7.400L.8 6.100L3.300 6.100L4.600 6.700Q7.600 2.500 11.600 0Z"/><path transform="translate(956 470)" d="M11.600 0L12.500 1.100Q9.300 4.100 5.200 10.400L4.200 11.900L2.500 11.700Q1.800 9.200 0 7.400L.8 6.100L3.300 6.100L4.600 6.700Q7.600 2.500 11.600 0Z"/><path transform="translate(980 470)" d="M11.600 0L12.500 1.100Q9.300 4.100 5.200 10.400L4.200 11.900L2.500 11.700Q1.800 9.200 0 7.400L.8 6.100L3.300 6.100L4.600 6.700Q7.600 2.500 11.600 0Z"/><path transform="translate(1004 470)" d="M11.600 0L12.500 1.100Q9.300 4.100 5.200 10.400L4.200 11.900L2.500 11.700Q1.800 9.200 0 7.400L.8 6.100L3.300 6.100L4.600 6.700Q7.600 2.500 11.600 0Z"/><path transform="translate(1028 470)" d="M11.600 0L12.500 1.100Q9.300 4.100 5.200 10.400L4.200 11.900L2.500 11.700Q1.800 9.200 0 7.400L.8 6.100L3.300 6.100L4.600 6.700Q7.600 2.500 11.600 0Z"/><path transform="translate(1056.2 470)" d="M11.600 0L12.500 1.100Q9.300 4.100 5.200 10.400L4.200 11.900L2.500 11.700Q1.800 9.200 0 7.400L.8 6.100L3.300 6.100L4.600 6.700Q7.600 2.500 11.600 0Z"/><path transform="translate(1080.4 470)" d="M11.600 0L12.500 1.100Q9.300 4.100 5.200 10.400L4.200 11.900L2.500 11.700Q1.800 9.200 0 7.400L.8 6.100L3.300 6.100L4.600 6.700Q7.600 2.500 11.600 0Z"/><path transform="translate(816 488)" d="M11.600 0L12.500 1.100Q9.300 4.100 5.200 10.400L4.200 11.900L2.500 11.700Q1.800 9.200 0 7.400L.8 6.100L3.300 6.100L4.600 6.700Q7.600 2.500 11.600 0Z"/><path transform="translate(832 488)" d="M11.600 0L12.500 1.100Q9.300 4.100 5.200 10.400L4.200 11.900L2.500 11.700Q1.800 9.200 0 7.400L.8 6.100L3.300 6.100L4.600 6.700Q7.600 2.500 11.600 0Z"/><path transform="translate(848 488)" d="M11.600 0L12.500 1.100Q9.300 4.100 5.200 10.400L4.200 11.900L2.500 11.700Q1.800 9.200 0 7.400L.8 6.100L3.300 6.100L4.600 6.700Q7.600 2.500 11.600 0Z"/><path transform="translate(880 488)" d="M11.600 0L12.500 1.100Q9.300 4.100 5.200 10.400L4.200 11.900L2.500 11.700Q1.800 9.200 0 7.400L.8 6.100L3.300 6.100L4.600 6.700Q7.600 2.500 11.600 0Z"/><path transform="translate(896 488)" d="M11.600 0L12.500 1.100Q9.300 4.100 5.200 10.400L4.200 11.900L2.500 11.700Q1.800 9.200 0 7.400L.8 6.100L3.300 6.100L4.600 6.700Q7.600 2.500 11.600 0Z"/><path transform="translate(912 488)" d="M11.600 0L12.500 1.100Q9.300 4.100 5.200 10.400L4.200 11.900L2.500 11.700Q1.800 9.200 0 7.400L.8 6.100L3.300 6.100L4.600 6.700Q7.600 2.500 11.600 0Z"/><path transform="translate(932 488)" d="M11.600 0L12.500 1.100Q9.300 4.100 5.200 10.400L4.200 11.900L2.500 11.700Q1.800 9.200 0 7.400L.8 6.100L3.300 6.100L4.600 6.700Q7.600 2.500 11.600 0Z"/><path transform="translate(956 488)" d="M11.600 0L12.500 1.100Q9.300 4.100 5.200 10.400L4.200 11.900L2.500 11.700Q1.800 9.200 0 7.400L.8 6.100L3.300 6.100L4.600 6.700Q7.600 2.500 11.600 0Z"/><path transform="translate(980 488)" d="M11.600 0L12.500 1.100Q9.300 4.100 5.200 10.400L4.200 11.900L2.500 11.700Q1.800 9.200 0 7.400L.8 6.100L3.300 6.100L4.600 6.700Q7.600 2.500 11.600 0Z"/><path transform="translate(1004 488)" d="M11.600 0L12.500 1.100Q9.300 4.100 5.200 10.400L4.200 11.900L2.500 11.700Q1.800 9.200 0 7.400L.8 6.100L3.300 6.100L4.600 6.700Q7.600 2.500 11.600 0Z"/><path transform="translate(1028 488)" d="M11.600 0L12.500 1.100Q9.300 4.100 5.200 10.400L4.200 11.900L2.500 11.700Q1.800 9.200 0 7.400L.8 6.100L3.300 6.100L4.600 6.700Q7.600 2.500 11.600 0Z"/><path transform="translate(1056.2 488)" d="M11.600 0L12.500 1.100Q9.300 4.100 5.200 10.400L4.200 11.900L2.500 11.700Q1.800 9.200 0 7.400L.8 6.100L3.300 6.100L4.600 6.700Q7.600 2.500 11.600 0Z"/><path transform="translate(1080.4 488)" d="M11.600 0L12.500 1.100Q9.300 4.100 5.200 10.400L4.200 11.900L2.500 11.700Q1.800 9.200 0 7.400L.8 6.100L3.300 6.100L4.600 6.700Q7.600 2.500 11.600 0Z"/><path transform="translate(1104.5 488)" d="M11.600 0L12.500 1.100Q9.300 4.100 5.200 10.400L4.200 11.900L2.500 11.700Q1.800 9.200 0 7.400L.8 6.100L3.300 6.100L4.600 6.700Q7.600 2.500 11.600 0Z"/><path transform="translate(1209.3 488)" d="M11.600 0L12.500 1.100Q9.300 4.100 5.200 10.400L4.200 11.900L2.500 11.700Q1.800 9.200 0 7.400L.8 6.100L3.300 6.100L4.600 6.700Q7.600 2.500 11.600 0Z"/><path transform="translate(1297.7 488)" d="M11.600 0L12.500 1.100Q9.300 4.100 5.200 10.400L4.200 11.900L2.500 11.700Q1.800 9.200 0 7.400L.8 6.100L3.300 6.100L4.600 6.700Q7.600 2.500 11.600 0Z"/><path transform="translate(816 506)" d="M11.600 0L12.500 1.100Q9.300 4.100 5.200 10.400L4.200 11.900L2.500 11.700Q1.800 9.200 0 7.400L.8 6.100L3.300 6.100L4.600 6.700Q7.600 2.500 11.600 0Z"/><path transform="translate(832 506)" d="M11.600 0L12.500 1.100Q9.300 4.100 5.200 10.400L4.200 11.900L2.500 11.700Q1.800 9.200 0 7.400L.8 6.100L3.300 6.100L4.600 6.700Q7.600 2.500 11.600 0Z"/><path transform="translate(848 506)" d="M11.600 0L12.500 1.100Q9.300 4.100 5.200 10.400L4.200 11.900L2.500 11.700Q1.800 9.200 0 7.400L.8 6.100L3.300 6.100L4.600 6.700Q7.600 2.500 11.600 0Z"/><path transform="translate(880 506)" d="M11.600 0L12.500 1.100Q9.300 4.100 5.200 10.400L4.200 11.900L2.500 11.700Q1.800 9.200 0 7.400L.8 6.100L3.300 6.100L4.600 6.700Q7.600 2.500 11.600 0Z"/><path transform="translate(896 506)" d="M11.600 0L12.500 1.100Q9.300 4.100 5.200 10.400L4.200 11.900L2.500 11.700Q1.800 9.200 0 7.400L.8 6.100L3.300 6.100L4.600 6.700Q7.600 2.500 11.600 0Z"/><path transform="translate(912 506)" d="M11.600 0L12.500 1.100Q9.300 4.100 5.200 10.400L4.200 11.900L2.500 11.700Q1.800 9.200 0 7.400L.8 6.100L3.300 6.100L4.600 6.700Q7.600 2.500 11.600 0Z"/><path transform="translate(932 506)" d="M11.600 0L12.500 1.100Q9.300 4.100 5.200 10.400L4.200 11.900L2.500 11.700Q1.800 9.200 0 7.400L.8 6.100L3.300 6.100L4.600 6.700Q7.600 2.500 11.600 0Z"/><path transform="translate(956 506)" d="M11.600 0L12.500 1.100Q9.300 4.100 5.200 10.400L4.200 11.900L2.500 11.700Q1.800 9.200 0 7.400L.8 6.100L3.300 6.100L4.600 6.700Q7.600 2.500 11.600 0Z"/><path transform="translate(980 506)" d="M11.600 0L12.500 1.100Q9.300 4.100 5.200 10.400L4.200 11.900L2.500 11.700Q1.800 9.200 0 7.400L.8 6.100L3.300 6.100L4.600 6.700Q7.600 2.500 11.600 0Z"/><path transform="translate(1004 506)" d="M11.600 0L12.500 1.100Q9.300 4.100 5.200 10.400L4.200 11.900L2.500 11.700Q1.800 9.200 0 7.400L.8 6.100L3.300 6.100L4.600 6.700Q7.600 2.500 11.600 0Z"/><path transform="translate(1028 506)" d="M11.600 0L12.500 1.100Q9.300 4.100 5.200 10.400L4.200 11.900L2.500 11.700Q1.800 9.200 0 7.400L.8 6.100L3.300 6.100L4.600 6.700Q7.600 2.500 11.600 0Z"/><path transform="translate(1056.2 506)" d="M11.600 0L12.500 1.100Q9.300 4.100 5.200 10.400L4.200 11.900L2.500 11.700Q1.800 9.200 0 7.400L.8 6.100L3.300 6.100L4.600 6.700Q7.600 2.500 11.600 0Z"/><path transform="translate(1080.4 506)" d="M11.600 0L12.500 1.100Q9.300 4.100 5.200 10.400L4.200 11.900L2.500 11.700Q1.800 9.200 0 7.400L.8 6.100L3.300 6.100L4.600 6.700Q7.600 2.500 11.600 0Z"/><path transform="translate(1104.5 506)" d="M11.600 0L12.500 1.100Q9.300 4.100 5.200 10.400L4.200 11.900L2.500 11.700Q1.800 9.200 0 7.400L.8 6.100L3.300 6.100L4.600 6.700Q7.600 2.500 11.600 0Z"/><path transform="translate(1209.3 506)" d="M11.600 0L12.500 1.100Q9.300 4.100 5.200 10.400L4.200 11.900L2.500 11.700Q1.800 9.200 0 7.400L.8 6.100L3.300 6.100L4.600 6.700Q7.600 2.500 11.600 0Z"/><path transform="translate(1104.5 524)" d="M11.600 0L12.500 1.100Q9.300 4.100 5.200 10.400L4.200 11.900L2.500 11.700Q1.800 9.200 0 7.400L.8 6.100L3.300 6.100L4.600 6.700Q7.600 2.500 11.600 0Z"/><path transform="translate(1209.3 524)" d="M11.600 0L12.500 1.100Q9.300 4.100 5.200 10.400L4.200 11.900L2.500 11.700Q1.800 9.200 0 7.400L.8 6.100L3.300 6.100L4.600 6.700Q7.600 2.500 11.600 0Z"/><path transform="translate(816 542)" d="M11.600 0L12.500 1.100Q9.300 4.100 5.200 10.400L4.200 11.900L2.500 11.700Q1.800 9.200 0 7.400L.8 6.100L3.300 6.100L4.600 6.700Q7.600 2.500 11.600 0Z"/><path transform="translate(832 542)" d="M11.600 0L12.500 1.100Q9.300 4.100 5.200 10.400L4.200 11.900L2.500 11.700Q1.800 9.200 0 7.400L.8 6.100L3.300 6.100L4.600 6.700Q7.600 2.500 11.600 0Z"/><path transform="translate(848 542)" d="M11.600 0L12.500 1.100Q9.300 4.100 5.200 10.400L4.200 11.900L2.500 11.700Q1.800 9.200 0 7.400L.8 6.100L3.300 6.100L4.600 6.700Q7.600 2.500 11.600 0Z"/><path transform="translate(880 542)" d="M11.600 0L12.500 1.100Q9.300 4.100 5.200 10.400L4.200 11.900L2.500 11.700Q1.800 9.200 0 7.400L.8 6.100L3.300 6.100L4.600 6.700Q7.600 2.500 11.600 0Z"/><path transform="translate(896 542)" d="M11.600 0L12.500 1.100Q9.300 4.100 5.200 10.400L4.200 11.900L2.500 11.700Q1.800 9.200 0 7.400L.8 6.100L3.300 6.100L4.600 6.700Q7.600 2.500 11.600 0Z"/><path transform="translate(912 542)" d="M11.600 0L12.500 1.100Q9.300 4.100 5.200 10.400L4.200 11.900L2.500 11.700Q1.800 9.200 0 7.400L.8 6.100L3.300 6.100L4.600 6.700Q7.600 2.500 11.600 0Z"/><path transform="translate(932 542)" d="M11.600 0L12.500 1.100Q9.300 4.100 5.200 10.400L4.200 11.900L2.500 11.700Q1.800 9.200 0 7.400L.8 6.100L3.300 6.100L4.600 6.700Q7.600 2.500 11.600 0Z"/><path transform="translate(956 542)" d="M11.600 0L12.500 1.100Q9.300 4.100 5.200 10.400L4.200 11.900L2.500 11.700Q1.800 9.200 0 7.400L.8 6.100L3.300 6.100L4.600 6.700Q7.600 2.500 11.600 0Z"/><path transform="translate(980 542)" d="M11.600 0L12.500 1.100Q9.300 4.100 5.200 10.400L4.200 11.900L2.500 11.700Q1.800 9.200 0 7.400L.8 6.100L3.300 6.100L4.600 6.700Q7.600 2.500 11.600 0Z"/><path transform="translate(1004 542)" d="M11.600 0L12.500 1.100Q9.300 4.100 5.200 10.400L4.200 11.900L2.500 11.700Q1.800 9.200 0 7.400L.8 6.100L3.300 6.100L4.600 6.700Q7.600 2.500 11.600 0Z"/><path transform="translate(1028 542)" d="M11.600 0L12.500 1.100Q9.300 4.100 5.200 10.400L4.200 11.900L2.500 11.700Q1.800 9.200 0 7.400L.8 6.100L3.300 6.100L4.600 6.700Q7.600 2.500 11.600 0Z"/><path transform="translate(1056.2 542)" d="M11.600 0L12.500 1.100Q9.300 4.100 5.200 10.400L4.200 11.900L2.500 11.700Q1.800 9.200 0 7.400L.8 6.100L3.300 6.100L4.600 6.700Q7.600 2.500 11.600 0Z"/><path transform="translate(1080.4 542)" d="M11.600 0L12.500 1.100Q9.300 4.100 5.200 10.400L4.200 11.900L2.500 11.700Q1.800 9.200 0 7.400L.8 6.100L3.300 6.100L4.600 6.700Q7.600 2.500 11.600 0Z"/><path transform="translate(1104.5 542)" d="M11.600 0L12.500 1.100Q9.300 4.100 5.200 10.400L4.200 11.900L2.500 11.700Q1.800 9.200 0 7.400L.8 6.100L3.300 6.100L4.600 6.700Q7.600 2.500 11.600 0Z"/><path transform="translate(1104.5 560)" d="M11.600 0L12.500 1.100Q9.300 4.100 5.200 10.400L4.200 11.900L2.500 11.700Q1.800 9.200 0 7.400L.8 6.100L3.300 6.100L4.600 6.700Q7.600 2.500 11.600 0Z"/><path transform="translate(816 579)" d="M11.600 0L12.500 1.100Q9.300 4.100 5.200 10.400L4.200 11.900L2.500 11.700Q1.800 9.200 0 7.400L.8 6.100L3.300 6.100L4.600 6.700Q7.600 2.500 11.600 0Z"/><path transform="translate(832 579)" d="M11.600 0L12.500 1.100Q9.300 4.100 5.200 10.400L4.200 11.900L2.500 11.700Q1.800 9.200 0 7.400L.8 6.100L3.300 6.100L4.600 6.700Q7.600 2.500 11.600 0Z"/><path transform="translate(848 579)" d="M11.600 0L12.500 1.100Q9.300 4.100 5.200 10.400L4.200 11.900L2.500 11.700Q1.800 9.200 0 7.400L.8 6.100L3.300 6.100L4.600 6.700Q7.600 2.500 11.600 0Z"/><path transform="translate(880 579)" d="M11.600 0L12.500 1.100Q9.300 4.100 5.200 10.400L4.200 11.900L2.500 11.700Q1.800 9.200 0 7.400L.8 6.100L3.300 6.100L4.600 6.700Q7.600 2.500 11.600 0Z"/><path transform="translate(896 579)" d="M11.600 0L12.500 1.100Q9.300 4.100 5.200 10.400L4.200 11.900L2.500 11.700Q1.800 9.200 0 7.400L.8 6.100L3.300 6.100L4.600 6.700Q7.600 2.500 11.600 0Z"/><path transform="translate(912 579)" d="M11.600 0L12.500 1.100Q9.300 4.100 5.200 10.400L4.200 11.900L2.500 11.700Q1.800 9.200 0 7.400L.8 6.100L3.300 6.100L4.600 6.700Q7.600 2.500 11.600 0Z"/><path transform="translate(932 579)" d="M11.600 0L12.500 1.100Q9.300 4.100 5.200 10.400L4.200 11.900L2.500 11.700Q1.800 9.200 0 7.400L.8 6.100L3.300 6.100L4.600 6.700Q7.600 2.500 11.600 0Z"/><path transform="translate(956 579)" d="M11.600 0L12.500 1.100Q9.300 4.100 5.200 10.400L4.200 11.900L2.500 11.700Q1.800 9.200 0 7.400L.8 6.100L3.300 6.100L4.600 6.700Q7.600 2.500 11.600 0Z"/><path transform="translate(980 579)" d="M11.600 0L12.500 1.100Q9.300 4.100 5.200 10.400L4.200 11.900L2.500 11.700Q1.800 9.200 0 7.400L.8 6.100L3.300 6.100L4.600 6.700Q7.600 2.500 11.600 0Z"/><path transform="translate(1004 579)" d="M11.600 0L12.500 1.100Q9.300 4.100 5.200 10.400L4.200 11.900L2.500 11.700Q1.800 9.200 0 7.400L.8 6.100L3.300 6.100L4.600 6.700Q7.600 2.500 11.600 0Z"/><path transform="translate(1028 579)" d="M11.600 0L12.500 1.100Q9.300 4.100 5.200 10.400L4.200 11.900L2.500 11.700Q1.800 9.200 0 7.400L.8 6.100L3.300 6.100L4.600 6.700Q7.600 2.500 11.600 0Z"/><path transform="translate(1056.2 579)" d="M11.600 0L12.500 1.100Q9.300 4.100 5.200 10.400L4.200 11.900L2.500 11.700Q1.800 9.200 0 7.400L.8 6.100L3.300 6.100L4.600 6.700Q7.600 2.500 11.600 0Z"/><path transform="translate(1080.4 579)" d="M11.600 0L12.500 1.100Q9.300 4.100 5.200 10.400L4.200 11.900L2.500 11.700Q1.800 9.200 0 7.400L.8 6.100L3.300 6.100L4.600 6.700Q7.600 2.500 11.600 0Z"/><path transform="translate(1104.5 579)" d="M11.600 0L12.500 1.100Q9.300 4.100 5.200 10.400L4.200 11.900L2.500 11.700Q1.800 9.200 0 7.400L.8 6.100L3.300 6.100L4.600 6.700Q7.600 2.500 11.600 0Z"/><path transform="translate(1209.3 579)" d="M11.600 0L12.500 1.100Q9.300 4.100 5.200 10.400L4.200 11.900L2.500 11.700Q1.800 9.200 0 7.400L.8 6.100L3.300 6.100L4.600 6.700Q7.600 2.500 11.600 0Z"/><path transform="translate(816 597)" d="M11.600 0L12.500 1.100Q9.300 4.100 5.200 10.400L4.200 11.900L2.500 11.700Q1.800 9.200 0 7.400L.8 6.100L3.300 6.100L4.600 6.700Q7.600 2.500 11.600 0Z"/><path transform="translate(832 597)" d="M11.600 0L12.500 1.100Q9.300 4.100 5.200 10.400L4.200 11.900L2.500 11.700Q1.800 9.200 0 7.400L.8 6.100L3.300 6.100L4.600 6.700Q7.600 2.500 11.600 0Z"/><path transform="translate(848 597)" d="M11.600 0L12.500 1.100Q9.300 4.100 5.200 10.400L4.200 11.900L2.500 11.700Q1.800 9.200 0 7.400L.8 6.100L3.300 6.100L4.600 6.700Q7.600 2.500 11.600 0Z"/><path transform="translate(880 597)" d="M11.600 0L12.500 1.100Q9.300 4.100 5.200 10.400L4.200 11.900L2.500 11.700Q1.800 9.200 0 7.400L.8 6.100L3.300 6.100L4.600 6.700Q7.600 2.500 11.600 0Z"/><path transform="translate(896 597)" d="M11.600 0L12.500 1.100Q9.300 4.100 5.200 10.400L4.200 11.900L2.500 11.700Q1.800 9.200 0 7.400L.8 6.100L3.300 6.100L4.600 6.700Q7.600 2.500 11.600 0Z"/><path transform="translate(912 597)" d="M11.600 0L12.500 1.100Q9.300 4.100 5.200 10.400L4.200 11.900L2.500 11.700Q1.800 9.200 0 7.400L.8 6.100L3.300 6.100L4.600 6.700Q7.600 2.500 11.600 0Z"/><path transform="translate(932 597)" d="M11.600 0L12.500 1.100Q9.300 4.100 5.200 10.400L4.200 11.900L2.500 11.700Q1.800 9.200 0 7.400L.8 6.100L3.300 6.100L4.600 6.700Q7.600 2.500 11.600 0Z"/><path transform="translate(956 597)" d="M11.600 0L12.500 1.100Q9.300 4.100 5.200 10.400L4.200 11.900L2.500 11.700Q1.800 9.200 0 7.400L.8 6.100L3.300 6.100L4.600 6.700Q7.600 2.500 11.600 0Z"/><path transform="translate(980 597)" d="M11.600 0L12.500 1.100Q9.300 4.100 5.200 10.400L4.200 11.900L2.500 11.700Q1.800 9.200 0 7.400L.8 6.100L3.300 6.100L4.600 6.700Q7.600 2.500 11.600 0Z"/><path transform="translate(1004 597)" d="M11.600 0L12.500 1.100Q9.300 4.100 5.200 10.400L4.200 11.900L2.500 11.700Q1.800 9.200 0 7.400L.8 6.100L3.300 6.100L4.600 6.700Q7.600 2.500 11.600 0Z"/><path transform="translate(1028 597)" d="M11.600 0L12.500 1.100Q9.300 4.100 5.200 10.400L4.200 11.900L2.500 11.700Q1.800 9.200 0 7.400L.8 6.100L3.300 6.100L4.600 6.700Q7.600 2.500 11.600 0Z"/><path transform="translate(1056.2 597)" d="M11.600 0L12.500 1.100Q9.300 4.100 5.200 10.400L4.200 11.900L2.500 11.700Q1.800 9.200 0 7.400L.8 6.100L3.300 6.100L4.600 6.700Q7.600 2.500 11.600 0Z"/><path transform="translate(1080.4 597)" d="M11.600 0L12.500 1.100Q9.300 4.100 5.200 10.400L4.200 11.900L2.500 11.700Q1.800 9.200 0 7.400L.8 6.100L3.300 6.100L4.600 6.700Q7.600 2.500 11.600 0Z"/><path transform="translate(1104.5 597)" d="M11.600 0L12.500 1.100Q9.300 4.100 5.200 10.400L4.200 11.900L2.500 11.700Q1.800 9.200 0 7.400L.8 6.100L3.300 6.100L4.600 6.700Q7.600 2.500 11.600 0Z"/><path transform="translate(1209.3 597)" d="M11.600 0L12.500 1.100Q9.300 4.100 5.200 10.400L4.200 11.900L2.500 11.700Q1.800 9.200 0 7.400L.8 6.100L3.300 6.100L4.600 6.700Q7.600 2.500 11.600 0Z"/><path transform="translate(816 615)" d="M11.600 0L12.500 1.100Q9.300 4.100 5.200 10.400L4.200 11.900L2.500 11.700Q1.800 9.200 0 7.400L.8 6.100L3.300 6.100L4.600 6.700Q7.600 2.500 11.600 0Z"/><path transform="translate(832 615)" d="M11.600 0L12.500 1.100Q9.300 4.100 5.200 10.400L4.200 11.900L2.500 11.700Q1.800 9.200 0 7.400L.8 6.100L3.300 6.100L4.600 6.700Q7.600 2.500 11.600 0Z"/><path transform="translate(848 615)" d="M11.600 0L12.500 1.100Q9.300 4.100 5.200 10.400L4.200 11.900L2.500 11.700Q1.800 9.200 0 7.400L.8 6.100L3.300 6.100L4.600 6.700Q7.600 2.500 11.600 0Z"/><path transform="translate(880 615)" d="M11.600 0L12.500 1.100Q9.300 4.100 5.200 10.400L4.200 11.900L2.500 11.700Q1.800 9.200 0 7.400L.8 6.100L3.300 6.100L4.600 6.700Q7.600 2.500 11.600 0Z"/><path transform="translate(896 615)" d="M11.600 0L12.500 1.100Q9.300 4.100 5.200 10.400L4.200 11.900L2.500 11.700Q1.800 9.200 0 7.400L.8 6.100L3.300 6.100L4.600 6.700Q7.600 2.500 11.600 0Z"/><path transform="translate(912 615)" d="M11.600 0L12.500 1.100Q9.300 4.100 5.200 10.400L4.200 11.900L2.500 11.700Q1.800 9.200 0 7.400L.8 6.100L3.300 6.100L4.600 6.700Q7.600 2.500 11.600 0Z"/><path transform="translate(932 615)" d="M11.600 0L12.500 1.100Q9.300 4.100 5.200 10.400L4.200 11.900L2.500 11.700Q1.800 9.200 0 7.400L.8 6.100L3.300 6.100L4.600 6.700Q7.600 2.500 11.600 0Z"/><path transform="translate(956 615)" d="M11.600 0L12.500 1.100Q9.300 4.100 5.200 10.400L4.200 11.900L2.500 11.700Q1.800 9.200 0 7.400L.8 6.100L3.300 6.100L4.600 6.700Q7.600 2.500 11.600 0Z"/><path transform="translate(980 615)" d="M11.600 0L12.500 1.100Q9.300 4.100 5.200 10.400L4.200 11.900L2.500 11.700Q1.800 9.200 0 7.400L.8 6.100L3.300 6.100L4.600 6.700Q7.600 2.500 11.600 0Z"/><path transform="translate(1004 615)" d="M11.600 0L12.500 1.100Q9.300 4.100 5.200 10.400L4.200 11.900L2.500 11.700Q1.800 9.200 0 7.400L.8 6.100L3.300 6.100L4.600 6.700Q7.600 2.500 11.600 0Z"/><path transform="translate(1028 615)" d="M11.600 0L12.500 1.100Q9.300 4.100 5.200 10.400L4.200 11.900L2.500 11.700Q1.800 9.200 0 7.400L.8 6.100L3.300 6.100L4.600 6.700Q7.600 2.500 11.600 0Z"/><path transform="translate(1056.2 615)" d="M11.600 0L12.500 1.100Q9.300 4.100 5.200 10.400L4.200 11.900L2.500 11.700Q1.800 9.200 0 7.400L.8 6.100L3.300 6.100L4.600 6.700Q7.600 2.500 11.600 0Z"/><path transform="translate(1080.4 615)" d="M11.600 0L12.500 1.100Q9.300 4.100 5.200 10.400L4.200 11.900L2.500 11.700Q1.800 9.200 0 7.400L.8 6.100L3.300 6.100L4.600 6.700Q7.600 2.500 11.600 0Z"/><path transform="translate(1104.5 615)" d="M11.600 0L12.500 1.100Q9.300 4.100 5.200 10.400L4.200 11.900L2.500 11.700Q1.800 9.200 0 7.400L.8 6.100L3.300 6.100L4.600 6.700Q7.600 2.500 11.600 0Z"/><path transform="translate(1209.3 615)" d="M11.600 0L12.500 1.100Q9.300 4.100 5.200 10.400L4.200 11.900L2.500 11.700Q1.800 9.200 0 7.400L.8 6.100L3.300 6.100L4.600 6.700Q7.600 2.500 11.600 0Z"/><path transform="translate(816 633)" d="M11.600 0L12.500 1.100Q9.300 4.100 5.200 10.400L4.200 11.900L2.500 11.700Q1.800 9.200 0 7.400L.8 6.100L3.300 6.100L4.600 6.700Q7.600 2.500 11.600 0Z"/><path transform="translate(832 633)" d="M11.600 0L12.500 1.100Q9.300 4.100 5.200 10.400L4.200 11.900L2.500 11.700Q1.800 9.200 0 7.400L.8 6.100L3.300 6.100L4.600 6.700Q7.600 2.500 11.600 0Z"/><path transform="translate(848 633)" d="M11.600 0L12.500 1.100Q9.300 4.100 5.200 10.400L4.200 11.900L2.500 11.700Q1.800 9.200 0 7.400L.8 6.100L3.300 6.100L4.600 6.700Q7.600 2.500 11.600 0Z"/><path transform="translate(880 633)" d="M11.600 0L12.500 1.100Q9.300 4.100 5.200 10.400L4.200 11.900L2.500 11.700Q1.800 9.200 0 7.400L.8 6.100L3.300 6.100L4.600 6.700Q7.600 2.500 11.600 0Z"/><path transform="translate(896 633)" d="M11.600 0L12.500 1.100Q9.300 4.100 5.200 10.400L4.200 11.900L2.500 11.700Q1.800 9.200 0 7.400L.8 6.100L3.300 6.100L4.600 6.700Q7.600 2.500 11.600 0Z"/><path transform="translate(912 633)" d="M11.600 0L12.500 1.100Q9.300 4.100 5.200 10.400L4.200 11.900L2.500 11.700Q1.800 9.200 0 7.400L.8 6.100L3.300 6.100L4.600 6.700Q7.600 2.500 11.600 0Z"/><path transform="translate(932 633)" d="M11.600 0L12.500 1.100Q9.300 4.100 5.200 10.400L4.200 11.900L2.500 11.700Q1.800 9.200 0 7.400L.8 6.100L3.300 6.100L4.600 6.700Q7.600 2.500 11.600 0Z"/><path transform="translate(956 633)" d="M11.600 0L12.500 1.100Q9.300 4.100 5.200 10.400L4.200 11.900L2.500 11.700Q1.800 9.200 0 7.400L.8 6.100L3.300 6.100L4.600 6.700Q7.600 2.500 11.600 0Z"/><path transform="translate(980 633)" d="M11.600 0L12.500 1.100Q9.300 4.100 5.200 10.400L4.200 11.900L2.500 11.700Q1.800 9.200 0 7.400L.8 6.100L3.300 6.100L4.600 6.700Q7.600 2.500 11.600 0Z"/><path transform="translate(1004 633)" d="M11.600 0L12.500 1.100Q9.300 4.100 5.200 10.400L4.200 11.900L2.500 11.700Q1.800 9.200 0 7.400L.8 6.100L3.300 6.100L4.600 6.700Q7.600 2.500 11.600 0Z"/><path transform="translate(1028 633)" d="M11.600 0L12.500 1.100Q9.300 4.100 5.200 10.400L4.200 11.900L2.500 11.700Q1.800 9.200 0 7.400L.8 6.100L3.300 6.100L4.600 6.700Q7.600 2.500 11.600 0Z"/><path transform="translate(1056.2 633)" d="M11.600 0L12.500 1.100Q9.300 4.100 5.200 10.400L4.200 11.900L2.500 11.700Q1.800 9.200 0 7.400L.8 6.100L3.300 6.100L4.600 6.700Q7.600 2.500 11.600 0Z"/><path transform="translate(1080.4 633)" d="M11.600 0L12.500 1.100Q9.300 4.100 5.200 10.400L4.200 11.900L2.500 11.700Q1.800 9.200 0 7.400L.8 6.100L3.300 6.100L4.600 6.700Q7.600 2.500 11.600 0Z"/><path transform="translate(1104.5 633)" d="M11.600 0L12.500 1.100Q9.300 4.100 5.200 10.400L4.200 11.900L2.500 11.700Q1.800 9.200 0 7.400L.8 6.100L3.300 6.100L4.600 6.700Q7.600 2.500 11.600 0Z"/><path transform="translate(1209.3 633)" d="M11.600 0L12.500 1.100Q9.300 4.100 5.200 10.400L4.200 11.900L2.500 11.700Q1.800 9.200 0 7.400L.8 6.100L3.300 6.100L4.600 6.700Q7.600 2.500 11.600 0Z"/><path transform="translate(816 651)" d="M11.600 0L12.500 1.100Q9.300 4.100 5.200 10.400L4.200 11.900L2.500 11.700Q1.800 9.200 0 7.400L.8 6.100L3.300 6.100L4.600 6.700Q7.600 2.500 11.600 0Z"/><path transform="translate(832 651)" d="M11.600 0L12.500 1.100Q9.300 4.100 5.200 10.400L4.200 11.900L2.500 11.700Q1.800 9.200 0 7.400L.8 6.100L3.300 6.100L4.600 6.700Q7.600 2.500 11.600 0Z"/><path transform="translate(848 651)" d="M11.600 0L12.500 1.100Q9.300 4.100 5.200 10.400L4.200 11.900L2.500 11.700Q1.800 9.200 0 7.400L.8 6.100L3.300 6.100L4.600 6.700Q7.600 2.500 11.600 0Z"/><path transform="translate(880 651)" d="M11.600 0L12.500 1.100Q9.300 4.100 5.200 10.400L4.200 11.900L2.500 11.700Q1.800 9.200 0 7.400L.8 6.100L3.300 6.100L4.600 6.700Q7.600 2.500 11.600 0Z"/><path transform="translate(896 651)" d="M11.600 0L12.500 1.100Q9.300 4.100 5.200 10.400L4.200 11.900L2.500 11.700Q1.800 9.200 0 7.400L.8 6.100L3.300 6.100L4.600 6.700Q7.600 2.500 11.600 0Z"/><path transform="translate(912 651)" d="M11.600 0L12.500 1.100Q9.300 4.100 5.200 10.400L4.200 11.900L2.500 11.700Q1.800 9.200 0 7.400L.8 6.100L3.300 6.100L4.600 6.700Q7.600 2.500 11.600 0Z"/><path transform="translate(932 651)" d="M11.600 0L12.500 1.100Q9.300 4.100 5.200 10.400L4.200 11.900L2.500 11.700Q1.800 9.200 0 7.400L.8 6.100L3.300 6.100L4.600 6.700Q7.600 2.500 11.600 0Z"/><path transform="translate(956 651)" d="M11.600 0L12.500 1.100Q9.300 4.100 5.200 10.400L4.200 11.900L2.500 11.700Q1.800 9.200 0 7.400L.8 6.100L3.300 6.100L4.600 6.700Q7.600 2.500 11.600 0Z"/><path transform="translate(980 651)" d="M11.600 0L12.500 1.100Q9.300 4.100 5.200 10.400L4.200 11.900L2.500 11.700Q1.800 9.200 0 7.400L.8 6.100L3.300 6.100L4.600 6.700Q7.600 2.500 11.600 0Z"/><path transform="translate(1004 651)" d="M11.600 0L12.500 1.100Q9.300 4.100 5.200 10.400L4.200 11.900L2.500 11.700Q1.800 9.200 0 7.400L.8 6.100L3.300 6.100L4.600 6.700Q7.600 2.500 11.600 0Z"/><path transform="translate(1028 651)" d="M11.600 0L12.500 1.100Q9.300 4.100 5.200 10.400L4.200 11.900L2.500 11.700Q1.800 9.200 0 7.400L.8 6.100L3.300 6.100L4.600 6.700Q7.600 2.500 11.600 0Z"/><path transform="translate(1056.2 651)" d="M11.600 0L12.500 1.100Q9.300 4.100 5.200 10.400L4.200 11.900L2.500 11.700Q1.800 9.200 0 7.400L.8 6.100L3.300 6.100L4.600 6.700Q7.600 2.500 11.600 0Z"/><path transform="translate(1080.4 651)" d="M11.600 0L12.500 1.100Q9.300 4.100 5.200 10.400L4.200 11.900L2.500 11.700Q1.800 9.200 0 7.400L.8 6.100L3.300 6.100L4.600 6.700Q7.600 2.500 11.600 0Z"/><path transform="translate(1104.5 651)" d="M11.600 0L12.500 1.100Q9.300 4.100 5.200 10.400L4.200 11.900L2.500 11.700Q1.800 9.200 0 7.400L.8 6.100L3.300 6.100L4.600 6.700Q7.600 2.500 11.600 0Z"/><path transform="translate(1209.3 651)" d="M11.600 0L12.500 1.100Q9.300 4.100 5.200 10.400L4.200 11.900L2.500 11.700Q1.800 9.200 0 7.400L.8 6.100L3.300 6.100L4.600 6.700Q7.600 2.500 11.600 0Z"/></g></svg></div><div class="a" style="left:1349px;top:212px;width:17px;height:448px;background:#f4f4f4"></div><div class="a" style="left:1350px;top:216px;width:15px;height:14px;background:#fff;border:1px solid #ababab"></div><svg style="left:1354px;top:221px" width="8" height="4" viewBox="0 0 8 4"><path d="M0 3.800L3.900 0L7.800 3.800z" fill="#6e6e6e"/></svg><div class="a" style="left:1350px;top:231px;width:15px;height:212px;background:#fff;border:1px solid #ababab"></div><div class="a" style="left:1350px;top:644px;width:15px;height:14px;background:#fff;border:1px solid #ababab"></div><svg style="left:1354px;top:649px" width="8" height="4" viewBox="0 0 8 4"><path d="M0 .2L3.900 4L7.800 .2z" fill="#6e6e6e"/></svg><div class="a" style="left:221px;top:660px;width:1145px;height:20px;background:#f0f0f0"></div><div class="a" style="left:222px;top:660px;width:14px;height:15px;background:#fff;border:1px solid #ababab"></div><svg style="left:227px;top:664px" width="4" height="8" viewBox="0 0 4 8"><path d="M3.800 0L0 3.900L3.800 7.800z" fill="#6e6e6e"/></svg><div class="a" style="left:237px;top:660px;width:1019px;height:15px;background:#fff;border:1px solid #ababab"></div><div class="a" style="left:1334px;top:660px;width:14px;height:15px;background:#fff;border:1px solid #ababab"></div><svg style="left:1339px;top:664px" width="4" height="8" viewBox="0 0 4 8"><path d="M.2 0L4 3.900L.2 7.800z" fill="#6e6e6e"/></svg><div class="a" style="left:221px;top:676px;width:1145px;height:32px;background:#f0f0f0"></div><div class="tb" style="left:223px;top:680px;width:824px;height:28px"></div><div class="a" style="left:1034px;top:682px;width:12px;height:24px;background:#f7f7f7"></div><svg style="left:1036px;top:698px" width="8" height="8" viewBox="0 0 8 8"><path d="M1.500 .5h5" stroke="#7d849f" stroke-width="1" fill="none"/><path d="M1 3h6L4 6.200z" fill="#868da6"/></svg><div class="grip" style="left:229px;top:0"><i style="top:685px"></i><i style="top:689px"></i><i style="top:693px"></i><i style="top:697px"></i><i style="top:701px"></i></div><svg style="left:241px;top:688px" width="10" height="12" viewBox="0 0 10 12"><rect x="0" y="0" width="2.900" height="11.800" fill="#b3cce5"/><path d="M8.900 0L2.900 5.900L8.900 11.800z" fill="#b3cce5"/></svg><svg style="left:267px;top:688px" width="8" height="12" viewBox="0 0 8 12"><path d="M6.300 0L.2 5.900L6.300 11.800z" fill="#b3cce5"/></svg><div class="sep" style="left:284px;top:684px;height:20px"></div><span class="t" style="left:309.5px;top:688.69px;font-size:11px;line-height:11px;color:#444;transform:scaleX(1.0039);">Page 1 of 1</span><div class="sep" style="left:390px;top:684px;height:20px"></div><svg style="left:403px;top:688px" width="8" height="12" viewBox="0 0 8 12"><path d="M0 0L6.100 5.900L0 11.800z" fill="#b3cce5"/></svg><svg style="left:425px;top:688px" width="10" height="12" viewBox="0 0 10 12"><rect x="6" y="0" width="2.900" height="11.800" fill="#b3cce5"/><path d="M0 0L6 5.900L0 11.800z" fill="#b3cce5"/></svg><div class="tb" style="left:1051px;top:680px;width:313px;height:28px"></div><div class="grip" style="left:1057px;top:0"><i style="top:685px"></i><i style="top:689px"></i><i style="top:693px"></i><i style="top:697px"></i><i style="top:701px"></i></div><div class="a" style="left:1069px;top:688px;width:10px;height:12px;border:1px solid #a8bfe2"></div><svg style="left:1092px;top:688px" width="12" height="12" viewBox="0 0 12 12"><path d="M1 0V12M10.500 0V12M1 6H10.500" stroke="#a8c4e4" stroke-width="1.200" fill="none"/></svg><div class="a" style="left:1110px;top:682px;width:24px;height:25px;background:#8fc6b8"></div><svg style="left:1116px;top:688px" width="11" height="12" viewBox="0 0 11 12"><path fill="#fff" d="M0 0h4.300v5H0zM6.500 0h4.300v5H6.500zM0 6.800h4.300v5H0zM6.500 6.800h4.300v5H6.500z"/></svg><div class="sep" style="left:1136px;top:684px;height:20px"></div><span class="t" style="left:1153.7px;top:688.99px;font-size:11px;line-height:11px;color:#444;transform:scaleX(1.0234);">100%</span><div class="a" style="left:1196px;top:693px;width:8px;height:2px;background:#7fb9ab"></div><div class="a" style="left:1212px;top:694px;width:120px;height:1px;background:#7fb9ab"></div><div class="a" style="left:1270px;top:688px;width:2.500px;height:12px;background:#7fb9ab"></div><div class="a" style="left:1341px;top:693px;width:8px;height:2px;background:#7fb9ab"></div><div class="a" style="left:1344px;top:690px;width:2px;height:8px;background:#7fb9ab"></div><div class="a" style="left:1351px;top:682px;width:11px;height:24px;background:#f7f7f7"></div><svg style="left:1354px;top:698px" width="8" height="8" viewBox="0 0 8 8"><path d="M1.500 .5h5" stroke="#7d849f" stroke-width="1" fill="none"/><path d="M1 3h6L4 6.200z" fill="#868da6"/></svg></body></html>
